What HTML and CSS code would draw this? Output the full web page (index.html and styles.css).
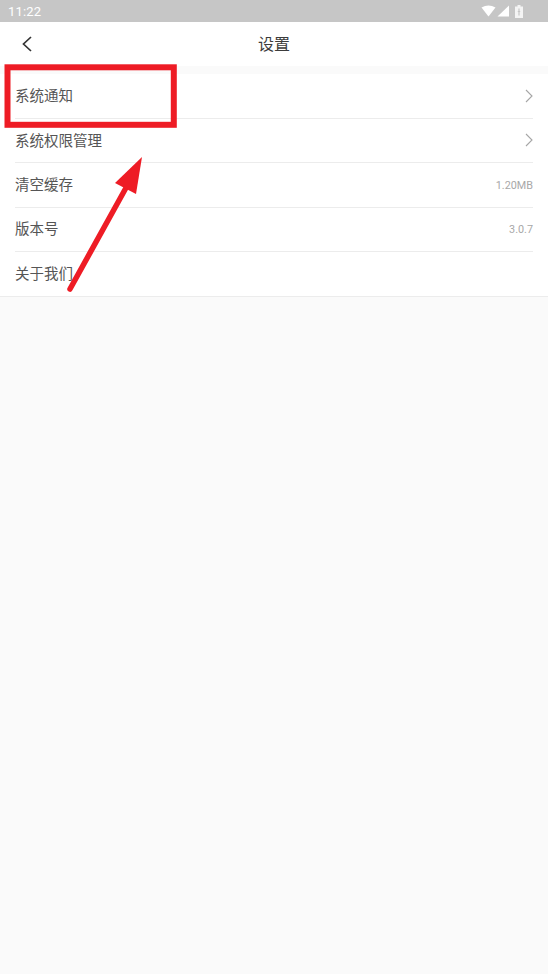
FILE: index.html
```html
<!DOCTYPE html>
<html lang="zh">
<head>
<meta charset="utf-8">
<title>设置</title>
<link rel="stylesheet" href="styles.css">
</head>
<body>
<div class="page">
  <div class="status">
    <span class="time">11:22</span>
    <div class="status-icons">
      <svg width="15" height="12" viewBox="0 0 15 12"><path d="M0.500 2.500 Q7.500 -1.500 14.500 2.500 L7.500 11.500 Z" fill="#fff"/></svg>
      <svg class="signal" width="12" height="12" viewBox="0 0 12 12"><path d="M12 0.500 V11.500 H0.500 Z" fill="#fff"/></svg>
      <svg class="battery" width="8" height="13" viewBox="0 0 8 13"><path d="M2.500 0 H5.500 V1.500 H8 V13 H0 V1.500 H2.500 Z" fill="#f4f4f4"/><path d="M4 3.500 V10.500 M2.800 6.500 H5.200" stroke="#c6c6c6" stroke-width="1.200"/></svg>
    </div>
  </div>
  <header class="nav">
    <svg class="back" width="12" height="16" viewBox="0 0 12 16"><path d="M10 1 L2.500 8 L10 15" fill="none" stroke="#333" stroke-width="1.700"/></svg>
    <h1 class="title">设置</h1>
  </header>
  <ul class="list">
    <li class="row"><span class="label">系统通知</span><svg class="chev" width="8" height="14" viewBox="0 0 8 14"><path d="M1 1 L7 7 L1 13" fill="none" stroke="#a6a6a6" stroke-width="1.100"/></svg></li>
    <li class="row"><span class="label">系统权限管理</span><svg class="chev" width="8" height="14" viewBox="0 0 8 14"><path d="M1 1 L7 7 L1 13" fill="none" stroke="#a6a6a6" stroke-width="1.100"/></svg></li>
    <li class="row"><span class="label">清空缓存</span><span class="value">1.20MB</span></li>
    <li class="row"><span class="label">版本号</span><span class="value">3.0.7</span></li>
    <li class="row"><span class="label">关于我们</span></li>
  </ul>
  <svg class="mark" width="548" height="974" viewBox="0 0 548 974">
    <rect x="7.500" y="67.300" width="166.300" height="57.500" fill="none" stroke="#ee1c25" stroke-width="6"/>
    <path d="M70 289 L127 186" fill="none" stroke="#ee1c25" stroke-width="5.500" stroke-linecap="round"/>
    <path d="M142 157 L136 194 L115 183 Z" fill="#ee1c25"/>
  </svg>
</div>
</body>
</html>
```

FILE: styles.css
```css
* { box-sizing: border-box; }
html, body { margin: 0; padding: 0; }
body { background: #fafafa; font-family: "Roboto", "Noto Sans CJK SC", sans-serif; }
.page { position: relative; width: 548px; height: 974px; overflow: hidden; background: #fafafa; }
.status { height: 22px; background: #c6c6c6; color: #fff; display: flex; align-items: center; justify-content: space-between; padding: 0 25px 0 8px; }
.time { font-size: 13px; font-weight: 400; letter-spacing: 0.2px; }
.status-icons { display: flex; align-items: center; }
.signal { margin-left: 1px; }
.battery { margin-left: 6px; }
.nav { height: 44px; background: #fff; display: flex; align-items: center; justify-content: center; position: relative; }
.back { position: absolute; left: 21px; top: 14px; }
.title { margin: 0 0 2px; font-size: 16px; font-weight: 400; color: #3c3c3c; font-family: "Noto Sans CJK SC", sans-serif; }
.list { list-style: none; margin: 8px 0 0; padding: 0.600px 15px 0; background: #fff; border-bottom: 1px solid #ececec; height: 223px; }
.row { height: 44.400px; display: flex; align-items: center; justify-content: space-between; border-bottom: 1px solid #ececec; padding-bottom: 3px; }
.row:last-child { border-bottom: 0; }
.label { font-size: 14.500px; color: #555; font-family: "Noto Sans CJK SC", sans-serif; }
.value { font-size: 10.800px; color: #a8a8a8; margin-top: 3px; }
.chev { margin-top: 2px; }
.mark { position: absolute; left: 0; top: 0; pointer-events: none; }
```
